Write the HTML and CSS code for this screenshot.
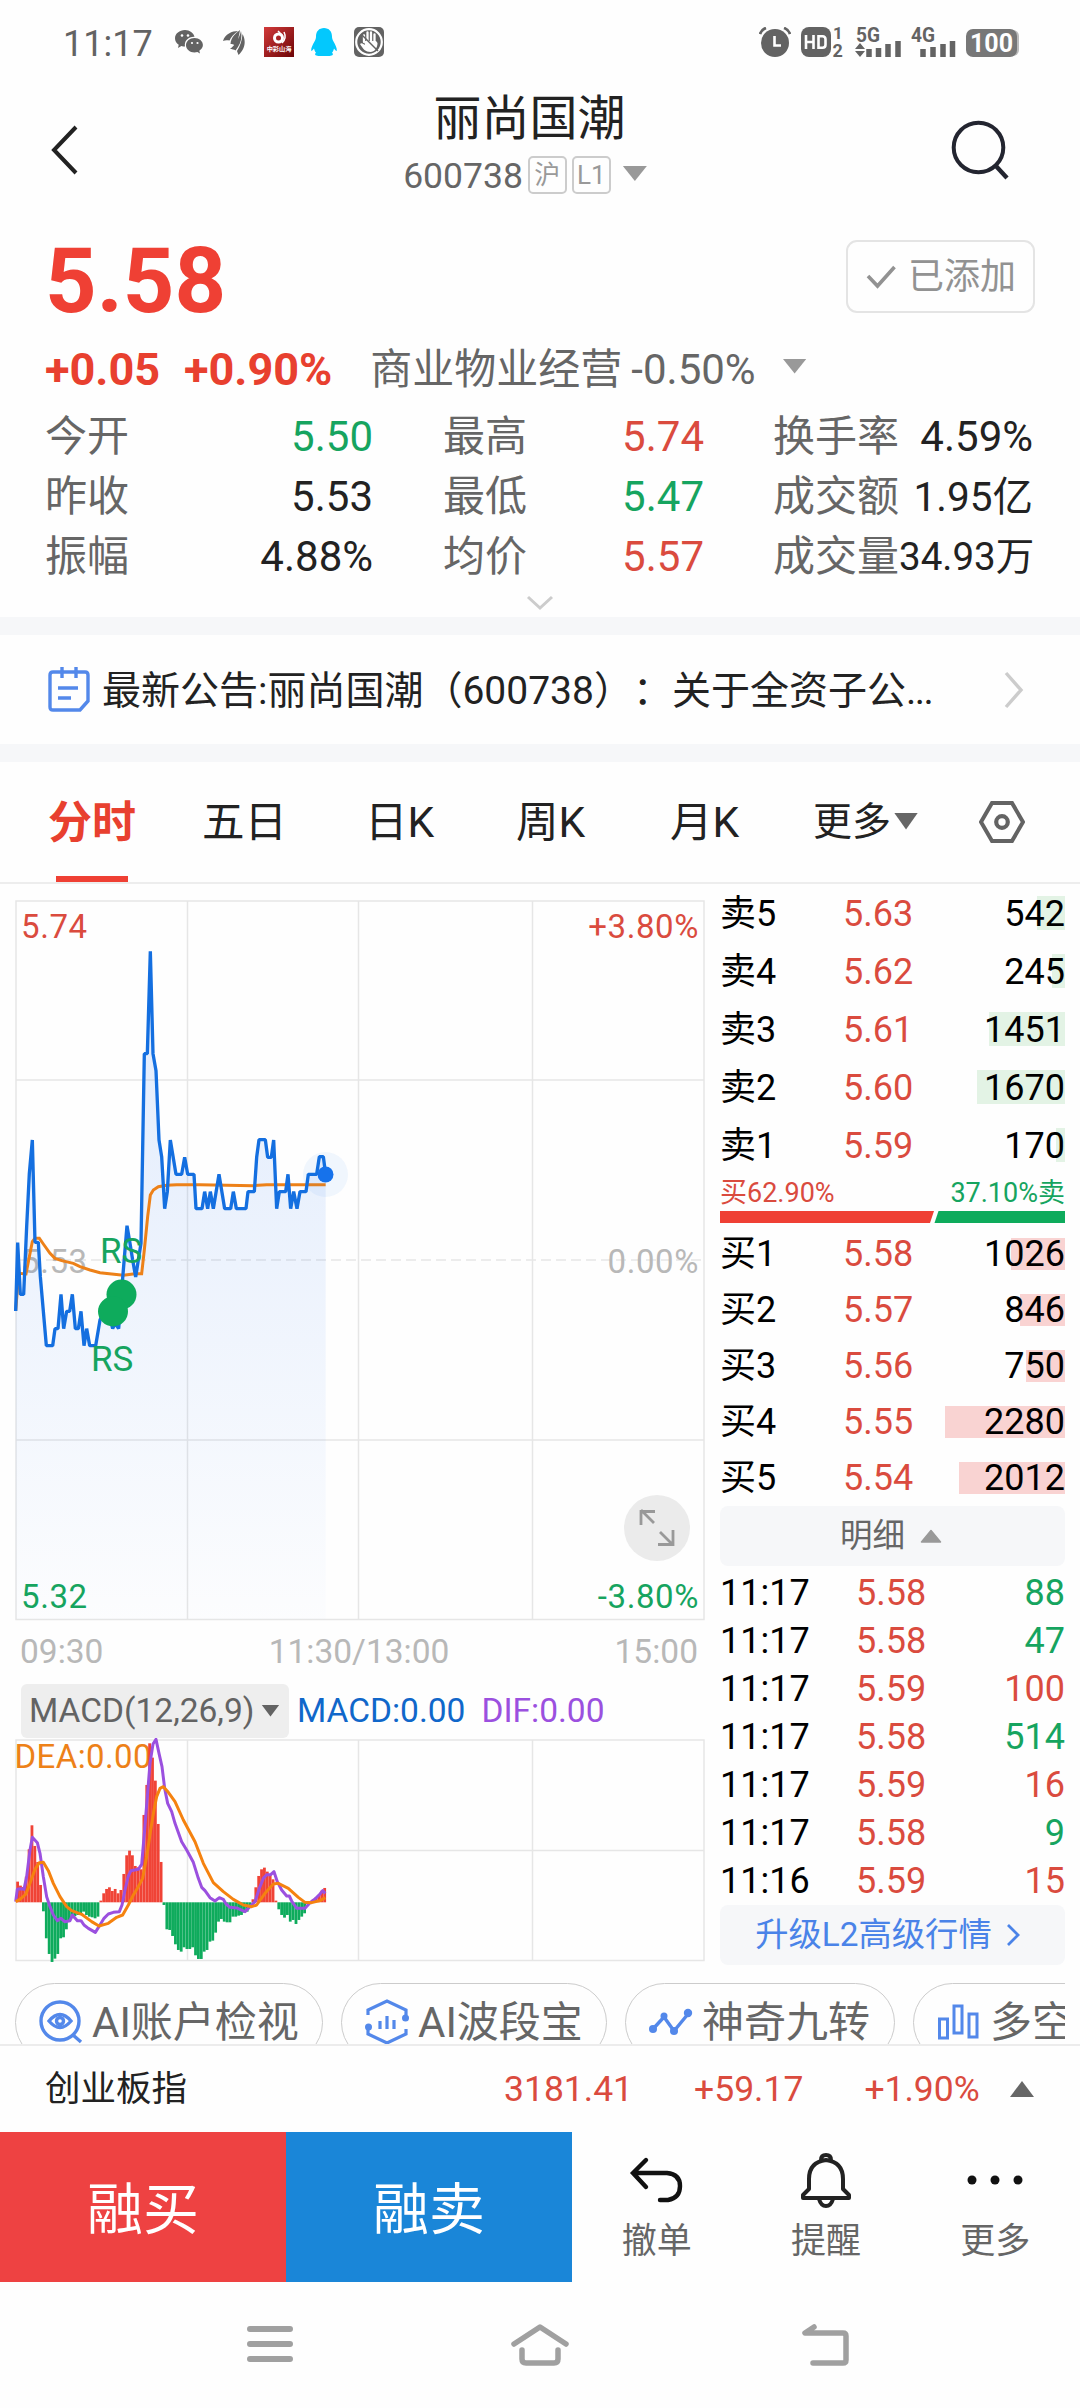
FILE: index.html
```html
<!DOCTYPE html>
<html lang="zh-CN">
<head>
    <meta charset="UTF-8">
    <meta name="viewport" content="width=device-width, initial-scale=1.0">
    <title>丽尚国潮 600738</title>
    <link rel="stylesheet" href="styles.css">
</head>
<body>
<div id="box">
    <div class="status">
        <span class="clock">11:17</span>
        <svg class="s-wechat" width="28" height="26" viewBox="0 0 28 26">
            <path d="M10 1C4.500 1 0 4.600 0 9.300c0 2.700 1.400 4.900 3.700 6.500L3 19l3.400-1.900c1.300.4 2.300.5 3.600.5C9 12 13 7.500 19.500 7.700 18.500 4 14.800 1 10 1z" fill="#636363"/>
            <path d="M19.500 9c-4.800 0-8.500 3.200-8.500 7.200s3.700 7.200 8.500 7.200c1 0 2-.2 2.900-.5L25 24.500l-.7-2.700c2.100-1.400 3.600-3.400 3.600-5.700C27.900 12.200 24.200 9 19.500 9z" fill="#636363"/>
            <g fill="#fff"><circle cx="7" cy="6.500" r="1.300"/><circle cx="13" cy="6.500" r="1.300"/><circle cx="17" cy="14" r="1.100"/><circle cx="22.500" cy="14" r="1.100"/></g>
        </svg>
        <svg class="s-wing" width="22" height="25" viewBox="0 0 22 25">
            <path d="M0 11C2 4 9 1 15 1 11 4 8 7 6.500 10.500 4 10 2 10 0 11zM7.500 14C8 7 13 3 17 0 16 6 15 11 12 15.500 10.500 14 9 14 7.500 14zM7 19c5-4 9-10 11-18 1.500 8-1 14-5.500 19.500C11 19.500 9 19 7 19zM14 21c3-5 5-10 5.500-17C24 12 21 20 15.500 25z" fill="#636363"/>
        </svg>
        <svg class="s-app" width="30" height="30" viewBox="0 0 30 30">
            <defs><linearGradient id="redapp" x1="0" y1="0" x2="1" y2="1"><stop offset="0" stop-color="#d23a3a"/><stop offset="1" stop-color="#6c0406"/></linearGradient></defs>
            <rect width="30" height="30" fill="url(#redapp)"/>
            <circle cx="14.500" cy="11" r="4" fill="none" stroke="#fff" stroke-width="3"/>
            <path d="M14 4l4 4M20 5c2 4 1 8-2 11" stroke="#fff" stroke-width="1.500" fill="none"/>
            <text x="15" y="23.500" font-size="6.200" font-weight="700" text-anchor="middle" fill="#fff">中彩山海</text>
        </svg>
        <svg class="s-qq" width="26" height="28" viewBox="0 0 26 28">
            <path d="M13 0c5 0 8 3.500 8 8.500 0 2 .5 3 1.500 5 2 3.500 3.500 6.500 3.300 9-.2 1-1.300 0-2.800-2-.4 2-1.200 3.300-2 4.200 2.500 2-.5 3.300-3.500 3.300H8.500C5.500 28 2.500 26.700 5 24.700c-.8-.9-1.600-2.200-2-4.200-1.500 2-2.600 3-2.800 2-.2-2.500 1.300-5.500 3.300-9C4.500 11.500 5 10.500 5 8.500 5 3.500 8 0 13 0z" fill="#03c8fd"/>
        </svg>
        <svg class="s-hand" width="30" height="30" viewBox="0 0 30 30">
            <rect width="30" height="30" rx="5" fill="#636363"/>
            <circle cx="15" cy="15" r="12.800" fill="none" stroke="#fff" stroke-width="2.200"/>
            <path d="M10 15V8.500M13.500 14V5.500M17 14V5.500M20.500 15V7.500" stroke="#fff" stroke-width="2.300" stroke-linecap="round"/>
            <path d="M6 17c1.500-2 3.500 0 5 1l-1-4h12l1.500 2c0 5-3 9-7 9-5 0-7.500-3-10.500-8z" fill="#fff"/>
            <path d="M7 7l17 17" stroke="#636363" stroke-width="1.500"/>
        </svg>
        <svg class="s-alarm" width="32" height="30" viewBox="0 0 32 30">
            <circle cx="16" cy="16" r="14" fill="#636363"/>
            <path d="M1 7C2 4 4 2 7 1M25 1c3 1 5 3 6 6" stroke="#636363" stroke-width="2.800" fill="none"/>
            <path d="M15.500 9v9.500H22" stroke="#fff" stroke-width="2.600" fill="none"/>
        </svg>
        <svg class="s-hd" width="44" height="48" viewBox="0 -8 44 48">
            <rect y="1" width="30" height="30" rx="8" fill="#636363"/>
            <path d="M5 9v14M12.500 9v14M5 16h7.500M17.500 10.300v11.400h4q3 0 3-3v-5.400q0-3-3-3z" stroke="#fff" stroke-width="2.600" fill="none"/>
            <text x="32" y="13" font-size="17" font-weight="700" fill="#636363">1</text>
            <text x="31.500" y="31" font-size="18" font-weight="700" fill="#636363">2</text>
        </svg>
        <svg class="s-5g" width="46" height="48" viewBox="0 -8 46 48">
            <text x="1" y="15.500" font-size="19.500" font-weight="700" fill="#636363" textLength="24" lengthAdjust="spacingAndGlyphs">5G</text>
            <path d="M0 23l5-6 5 6zM0 25l5 6 5-6z" fill="#636363"/>
            <path d="M14 31v-8M23.500 31v-9M33 31V18M43 31V15" stroke="#636363" stroke-width="5.500"/>
        </svg>
        <svg class="s-4g" width="46" height="48" viewBox="0 -8 46 48">
            <text x="0" y="15.500" font-size="19.500" font-weight="700" fill="#636363" textLength="24" lengthAdjust="spacingAndGlyphs">4G</text>
            <path d="M12 31v-8M22 31V21M32 31V18M41.500 31V15" stroke="#636363" stroke-width="5.500"/>
        </svg>
        <span class="battery">100</span>
    </div>

    <header>
        <svg class="back" width="28" height="50" viewBox="0 0 28 50"><path d="M26 2L4 25l22 23" fill="none" stroke="#222" stroke-width="4"/></svg>
        <div class="name">
            <h1>丽尚国潮</h1>
            <p><span>600738</span><i>沪</i><i>L1</i><b class="tri-down"></b></p>
        </div>
        <svg class="search" width="60" height="60" viewBox="0 0 60 60"><circle cx="27.500" cy="27.500" r="24.800" fill="none" stroke="#232530" stroke-width="4"/><path d="M44.500 45.500L56 58" stroke="#232530" stroke-width="4.400"/></svg>
    </header>

    <div class="quote">
        <div class="price">
            <strong>5.58</strong>
            <span class="added"><svg width="30" height="24" viewBox="0 0 30 24"><path d="M2 11l9.500 10L28.500 2" fill="none" stroke="#929292" stroke-width="3.600"/></svg>已添加</span>
        </div>
        <div class="change"><b>+0.05</b><b>+0.90%</b><span>商业物业经营</span><em>-0.50%</em><i class="tri-down"></i></div>
        <dl class="stats">
            <div><dt>今开</dt><dd class="green">5.50</dd></div>
            <div><dt>最高</dt><dd class="red">5.74</dd></div>
            <div><dt>换手率</dt><dd>4.59%</dd></div>
            <div><dt>昨收</dt><dd>5.53</dd></div>
            <div><dt>最低</dt><dd class="green">5.47</dd></div>
            <div><dt>成交额</dt><dd class="mid">1.95亿</dd></div>
            <div><dt>振幅</dt><dd>4.88%</dd></div>
            <div><dt>均价</dt><dd class="red">5.57</dd></div>
            <div><dt>成交量</dt><dd class="small">34.93万</dd></div>
        </dl>
        <svg class="fold" width="28" height="16" viewBox="0 0 28 16"><path d="M2 2l12 11L26 2" fill="none" stroke="#ccc" stroke-width="3"/></svg>
    </div>

    <div class="notice">
        <svg width="42" height="46" viewBox="0 0 42 46" fill="none" stroke="#5388ea" stroke-width="3.400">
            <path d="M5 5h32q3 0 3 3v26l-8 9H5q-3 0-3-3V8q0-3 3-3zM14 0v11M28 0v11M10 21h20M10 31h13"/>
        </svg>
        <p>最新公告:丽尚国潮（600738）：关于全资子公<span>...</span></p>
        <svg class="go" width="20" height="38" viewBox="0 0 20 38"><path d="M2 2l15 17L2 36" fill="none" stroke="#ccc" stroke-width="3.400"/></svg>
    </div>

    <ul class="tabs">
        <li class="active">分时</li>
        <li>五日</li>
        <li>日K</li>
        <li>周K</li>
        <li>月K</li>
        <li class="more">更多<i class="tri-down"></i></li>
        <li class="set"><svg width="46" height="42" viewBox="0 0 46 42" fill="none" stroke="#636363"><path d="M13 2h20l11 19-11 19H13L2 21z" stroke-width="4"/><circle cx="23" cy="21" r="5.800" stroke-width="4.200"/></svg></li>
    </ul>

    <section>
        <div class="left">
            <svg width="720" height="738" viewBox="0 0 720 738">
                <defs><linearGradient id="area" x1="0" y1="0" x2="0" y2="1"><stop offset="0" stop-color="#1668f0" stop-opacity=".13"/><stop offset="1" stop-color="#1668f0" stop-opacity=".01"/></linearGradient></defs>
                <g fill="none" stroke="#e6e6e6" stroke-width="1.500">
                    <path d="M16 17h688v718.500H16zM187.500 17v718M358.500 17v718M532.500 17v718M16 196h688M16 556h688"/>
                    <path d="M16 376h688" stroke-dasharray="10 5"/>
                </g>
                <g font-size="33" letter-spacing=".6">
                    <text x="21" y="389" fill="#b8b8b8">5.53</text>
                    <text x="699" y="389" fill="#b8b8b8" text-anchor="end">0.00%</text>
                </g>
                <g transform="translate(0 -4) scale(.33333)" fill="none" stroke-width="9" stroke-linejoin="miter">
                    <path stroke="none" fill="url(#area)" d="M47 1293L53 1088 61 1243 71 1243 80 1040 88 880 97 780 105 1087 115 1087 121 1190 139 1397 158 1397 165 1346 174 1346 183 1243 191 1346 200 1294 209 1294 217 1243 226 1346 235 1346 243 1294 252 1397 260 1346 269 1397 287 1397 300 1320 312 1294 325 1294 338 1346 345 1330 356 1346 364 1243 381 1037 390 1090 398 1140 407 1191 415 1140 423 1090 433 521 442 521 451 214 459 521 468 572 477 780 485 830 494 986 502 935 511 780 528 883 545 883 554 832 563 883 582 883 588 986 606 986 614 935 623 986 631 935 640 986 657 883 674 986 692 986 700 935 709 986 738 986 744 935 763 935 770 832 777 779 796 779 803 832 814 832 821 780 830 986 838 935 857 935 864 883 872 986 881 935 891 986 900 935 918 935 925 883 950 883 958 830 970 830 977 883V2218H47z"/>
                    <path stroke="#ed8118" d="M47 1293L56 1180 78 1182 88 1130 97 1085 105 1075 118 1075 130 1092 150 1120 165 1135 185 1142 220 1150 240 1160 270 1170 300 1178 335 1182 370 1186 405 1181 425 1181 433 1110 443 1010 451 945 460 930 475 920 500 916 530 914 600 914 760 917 800 914 850 914 977 914"/>
                    <path stroke="#146fe0" stroke-width="10" stroke-linejoin="bevel" d="M47 1293L53 1088 61 1243 71 1243 80 1040 88 880 97 780 105 1087 115 1087 121 1190 139 1397 158 1397 165 1346 174 1346 183 1243 191 1346 200 1294 209 1294 217 1243 226 1346 235 1346 243 1294 252 1397 260 1346 269 1397 287 1397 300 1320 312 1294 325 1294 338 1346 345 1330 356 1346 364 1243 381 1037 390 1090 398 1140 407 1191 415 1140 423 1090 433 521 442 521 451 214 459 521 468 572 477 780 485 830 494 986 502 935 511 780 528 883 545 883 554 832 563 883 582 883 588 986 606 986 614 935 623 986 631 935 640 986 657 883 674 986 692 986 700 935 709 986 738 986 744 935 763 935 770 832 777 779 796 779 803 832 814 832 821 780 830 986 838 935 857 935 864 883 872 986 881 935 891 986 900 935 918 935 925 883 950 883 958 830 970 830 977 883"/>
                </g>
                <circle cx="325.500" cy="290.500" r="22.500" fill="#1672eb" fill-opacity=".06"/>
                <circle cx="325.500" cy="290.500" r="8" fill="#1672eb"/>
                <g fill="#0eab5c"><circle cx="121.500" cy="410.500" r="15"/><circle cx="113" cy="427.500" r="15"/></g>
                <g font-size="33" letter-spacing=".6">
                    <text x="21" y="54" fill="#da4b3e">5.74</text>
                    <text x="699" y="54" fill="#da4b3e" text-anchor="end">+3.80%</text>
                    <text x="21" y="724" fill="#16a45f">5.32</text>
                    <text x="699" y="724" fill="#16a45f" text-anchor="end">-3.80%</text>
                    <text x="100" y="379" fill="#16a45f" font-size="35" letter-spacing="0">RS</text>
                    <text x="91" y="487" fill="#16a45f" font-size="35" letter-spacing="0">RS</text>
                </g>
                <circle cx="657" cy="644" r="33" fill="#ebebeb"/>
                <path d="M654 639l-13-13M655 627.500h-14v13.500M660 648l13 13M658 660.500h15V646" fill="none" stroke="#999" stroke-width="2.800"/>
            </svg>
            <div class="times"><span>09:30</span><span>11:30/13:00</span><span>15:00</span></div>
            <div class="macd"><span class="pick">MACD(12,26,9)<i class="tri-down"></i></span><span class="m1">MACD:0.00</span><span class="m2">DIF:0.00</span></div>
            <svg width="720" height="226" viewBox="0 0 720 226">
                <path d="M16 2h688v220.500H16zM187.500 2v220M358.500 2v220M532.500 2v220M16 112.500h688" fill="none" stroke="#e6e6e6" stroke-width="1.500"/>
                <text x="14.500" y="30" font-size="33" fill="#ed8118" letter-spacing=".4">DEA:0.00</text>
                <g id="bars"></g>
                <g transform="translate(0 -138) scale(.33333)" fill="none" stroke-width="9" stroke-linejoin="round">
                    <path stroke="#9b50df" d="M47 905L52 868 62 866 72 868 80 830 90 750 97 712 112 728 120 760 130 830 140 890 150 920 160 945 172 962 183 955 194 965 210 962 217 945 232 962 243 962 252 975 265 985 286 997 300 975 312 955 325 942 340 937 358 935 366 915 375 870 385 828 393 812 415 808 425 793 433 700 442 590 450 490 459 432 468 418 477 460 486 500 494 565 503 610 515 635 525 670 545 725 560 750 580 787 595 835 605 862 615 872 630 893 645 903 658 893 670 898 678 912 690 922 710 924 735 935 750 920 765 905 778 865 790 835 800 824 812 824 822 815 832 845 845 870 860 888 868 888 875 903 890 925 915 925 930 908 945 897 960 882 968 872 976 880"/>
                    <path stroke="#f5820f" d="M47 905L60 898 78 882 90 850 105 808 118 788 130 787 145 812 160 850 180 890 200 920 215 932 245 943 275 965 297 978 325 970 350 952 368 945 385 915 400 885 415 860 428 835 440 770 452 690 462 630 470 590 480 565 490 560 505 577 525 605 550 660 585 725 610 790 640 848 670 875 700 898 730 915 755 920 770 915 795 880 820 852 835 850 865 865 895 892 915 907 935 908 960 902 976 893"/>
                </g>
            </svg>
        </div>

        <div class="right">
            <ul class="sell">
                <li><span>卖5</span><em>5.63</em><b>542</b><i style="width:28px"></i></li>
                <li><span>卖4</span><em>5.62</em><b>245</b><i style="width:13px"></i></li>
                <li><span>卖3</span><em>5.61</em><b>1451</b><i style="width:76px"></i></li>
                <li><span>卖2</span><em>5.60</em><b>1670</b><i style="width:88px"></i></li>
                <li><span>卖1</span><em>5.59</em><b>170</b><i style="width:9px"></i></li>
            </ul>
            <div class="ratio"><span class="red">买62.90%</span><span class="green">37.10%卖</span></div>
            <svg class="ratiobar" width="345" height="12" viewBox="0 0 345 12"><path d="M0 0h214l-4 12H0z" fill="#ef4034"/><path d="M218.500 0H345v12H214.500z" fill="#0eab5c"/></svg>
            <ul class="buy">
                <li><span>买1</span><em>5.58</em><b>1026</b><i style="width:54px"></i></li>
                <li><span>买2</span><em>5.57</em><b>846</b><i style="width:45px"></i></li>
                <li><span>买3</span><em>5.56</em><b>750</b><i style="width:39px"></i></li>
                <li><span>买4</span><em>5.55</em><b>2280</b><i style="width:120px"></i></li>
                <li><span>买5</span><em>5.54</em><b>2012</b><i style="width:106px"></i></li>
            </ul>
            <div class="detail">明细<svg width="22" height="15" viewBox="0 0 22 15"><path d="M11 1.500L20.500 13H1.500z" fill="#999" stroke="#999" stroke-width="1.500" stroke-linejoin="round"/></svg></div>
            <ul class="ticks">
                <li><span>11:17</span><em>5.58</em><b class="green">88</b></li>
                <li><span>11:17</span><em>5.58</em><b class="green">47</b></li>
                <li><span>11:17</span><em>5.59</em><b class="red">100</b></li>
                <li><span>11:17</span><em>5.58</em><b class="green">514</b></li>
                <li><span>11:17</span><em>5.59</em><b class="red">16</b></li>
                <li><span>11:17</span><em>5.58</em><b class="green">9</b></li>
                <li><span>11:16</span><em>5.59</em><b class="red">15</b></li>
            </ul>
            <div class="level2">升级L2高级行情<svg width="14" height="24" viewBox="0 0 14 24"><path d="M2 2l10 10L2 22" fill="none" stroke="#4a83e8" stroke-width="2.800"/></svg></div>
        </div>
    </section>

    <div class="tools">
        <a class="t1"><svg width="44" height="44" viewBox="0 0 44 44" fill="none" stroke="#5388ea" stroke-width="3.400"><circle cx="21" cy="21" r="19"/><path d="M34 35l8 7M10 21q11-13 22 0-11 13-22 0z"/><circle cx="21" cy="21" r="3.500"/></svg>AI账户检视</a>
        <a class="t2"><svg width="44" height="46" viewBox="0 0 44 46" fill="none" stroke="#5388ea" stroke-width="3.200"><path d="M3 16v-5L22 2l19 9v5M3 30v5l19 9 19-9v-5M15 22v8M22 17v13M29 21v9"/><g fill="#5388ea" stroke="none"><circle cx="40.500" cy="19" r="3.500"/><circle cx="3.500" cy="28" r="3.500"/></g></svg>AI波段宝</a>
        <a class="t3"><svg width="44" height="28" viewBox="0 0 44 28" fill="none" stroke="#5388ea" stroke-width="3.400"><path d="M4 21L15 9l10 14L39 6"/><g fill="#5388ea" stroke="none"><circle cx="4" cy="21" r="4"/><circle cx="15" cy="8" r="3.500"/><circle cx="25" cy="23" r="4"/><circle cx="39" cy="5" r="4.200"/></g></svg>神奇九转</a>
        <a class="t4"><svg width="44" height="38" viewBox="0 0 44 38" fill="none" stroke="#5388ea" stroke-width="3"><path d="M2.500 16h8v19h-8zM17 3h8v27h-8zM32 11h8v23h-8z"/></svg>多空</a>
    </div>

    <div class="index"><span>创业板指</span><b>3181.41</b><b>+59.17</b><b>+1.90%</b><i></i></div>

    <footer>
        <a class="btn buybtn">融买</a>
        <a class="btn sellbtn">融卖</a>
        <a class="act"><svg width="56" height="56" viewBox="0 0 56 56" fill="none" stroke="#111" stroke-width="4.400"><path d="M17 8L4 21l13 14M5 21h33q13 1 13 13t-12 14h-8" stroke-linecap="round"/></svg>撤单</a>
        <a class="act"><svg width="56" height="56" viewBox="0 0 56 56" fill="none" stroke="#222" stroke-width="4" stroke-linejoin="round"><path d="M28 8q-17 2-17 19v10l-6 6v3h46v-3l-6-6V27Q45 10 28 8zM23 8q0-5 5-5t5 5M21 47q2 7 7 7t7-7"/></svg>提醒</a>
        <a class="act"><svg width="56" height="56" viewBox="0 0 56 56" fill="#111"><circle cx="5" cy="28" r="4.500"/><circle cx="28" cy="28" r="4.500"/><circle cx="51" cy="28" r="4.500"/></svg>更多</a>
    </footer>

    <div class="nav">
        <svg width="46" height="42" viewBox="0 0 46 42"><path d="M3 5h40M3 20h40M3 35h40" stroke="#a0a0a0" stroke-width="6" stroke-linecap="round"/></svg>
        <svg class="home" width="60" height="46" viewBox="0 0 60 46" fill="none" stroke="#a0a0a0" stroke-width="5.500" stroke-linecap="round" stroke-linejoin="round"><path d="M4 22L30 5l26 17M12 28v9q0 4 4 4h28q4 0 4-4v-9"/></svg>
        <svg width="50" height="44" viewBox="0 0 50 44" fill="none" stroke="#a0a0a0" stroke-width="5.500" stroke-linecap="round" stroke-linejoin="round"><path d="M14 4L5 10h38q3 0 3 3v24q0 3-3 3H13"/></svg>
    </div>
</div>
<script src="bars.js"></script>
</body>
</html>
```
FILE: bars.js
```js
// 每分钟的MACD柱，正数在零轴上方
(function(){
    var aData=[62,50,46,77,159,231,169,121,52,-27,-108,-155,-179,-169,-155,-108,-105,-81,-58,-48,-41,-38,-38,-28,-38,-43,-45,-48,-43,5,27,40,45,34,40,27,37,85,141,155,141,109,105,99,262,352,477,434,365,235,121,-8,-81,-83,-101,-126,-143,-148,-135,-140,-140,-135,-159,-170,-170,-148,-143,-118,-115,-91,-58,-50,-58,-60,-60,-43,-43,-40,-38,-31,-28,-8,9,45,79,99,104,92,82,69,5,-21,-38,-46,-38,-58,-53,-65,-53,-43,-33,-5,3,9,15,22,35,43];
    var oBars=document.querySelector('#bars');
    var zero=164.3;
    for(var i=0;i<aData.length;i++){
        var oRect=document.createElementNS('http://www.w3.org/2000/svg', 'rect');
        var h=Math.abs(aData[i])/3;
        oRect.setAttribute('x', 16.2+i*2.87);
        oRect.setAttribute('y', aData[i]>0?zero-h:zero);
        oRect.setAttribute('width', 2.8);
        oRect.setAttribute('height', h);
        oRect.setAttribute('fill', aData[i]>0?'#f04336':'#0eab5c');
        oBars.appendChild(oRect);
    }
})();
```
FILE: styles.css
```css
*{
    margin: 0;
    padding: 0;
    box-sizing: border-box;
    list-style: none;
    font-style: normal;
}
body{
    font-family: Roboto, "Noto Sans CJK SC", sans-serif;
    background: #fefefe;
    color: #222;
}
svg{
    display: block;
    flex: none;
}
#box{
    width: 1080px;
    height: 2408px;
    overflow: hidden;
}
.red{color: #da4b3e;}
.green{color: #16a45f;}
.tri-down{
    width: 24px;
    height: 15px;
    background: #999;
    clip-path: polygon(0 0, 100% 0, 50% 100%);
}

.status{
    height: 84px;
    display: flex;
    align-items: center;
    padding-left: 63px;
    color: #636363;
}
.clock{
    width: 112px;
    font-size: 36px;
    line-height: 84px;
    padding-top: 3px;
}
.s-wing{margin-left: 20px;}
.s-app{margin-left: 19px;}
.s-qq{margin-left: 17px;}
.s-hand{margin-left: 17px;}
.s-alarm{margin-left: 375px;}
.s-hd{margin-left: 10px;}
.s-5g{margin-left: 10px;}
.s-4g{margin-left: 10px;}
.battery{
    width: 51px;
    height: 28px;
    margin: 2px 0 0 9px;
    border-radius: 7px;
    background: #777;
    color: #fff;
    font-size: 25px;
    font-weight: 700;
    line-height: 29px;
    text-align: center;
    box-shadow: 3px 0 0 -1px #bbb;
}

header{
    height: 136px;
    display: flex;
    justify-content: space-between;
    padding: 0 69px 0 50px;
}
.back{margin-top: 41px;}
.search{margin-top: 36px;}
.name{
    width: 300px;
    margin-left: 30px;
    text-align: center;
}
.name h1{
    font-size: 48px;
    font-weight: 400;
    line-height: 60px;
    padding-top: 5px;
}
.name p{
    display: flex;
    align-items: center;
    justify-content: center;
    height: 44px;
    margin: 4px 9px 0 0;
    font-size: 35.5px;
    color: #666;
}
.name p span{
    line-height: 46px;
    padding-top: 2px;
}
.name i{
    width: 39px;
    height: 38px;
    margin-left: 5px;
    border: 2px solid #ccc;
    border-radius: 5px;
    font-size: 26px;
    line-height: 35px;
    color: #999;
}
.name .tri-down{margin: -3px 0 0 12px;}

.quote{
    height: 397px;
    padding: 0 45px;
}
.price{
    display: flex;
    justify-content: space-between;
    align-items: flex-start;
    padding-top: 20px;
    height: 108px;
}
.price strong{
    font-size: 90px;
    line-height: 84px;
    color: #ef4034;
}
.added{
    display: flex;
    align-items: center;
    width: 189px;
    height: 73px;
    padding-left: 18px;
    border: 2px solid #e4e4e4;
    border-radius: 11px;
    font-size: 36px;
    line-height: 72px;
    color: #929292;
}
.added svg{margin-right: 12px;}
.change{
    display: flex;
    align-items: center;
    height: 78px;
    padding-top: 6px;
    font-size: 42px;
    line-height: 60px;
}
.change b{
    margin-right: 24px;
    font-size: 45px;
    color: #e8402f;
}
.change span{
    margin: 0 9px 0 14px;
    color: #666;
}
.change em{color: #666;}
.change i{margin: -8px 0 0 27px;}
.stats{
    display: grid;
    grid-template-columns: 328px 261px 260px;
    column-gap: 70px;
    height: 180px;
}
.stats div{
    display: flex;
    justify-content: space-between;
    height: 60px;
    line-height: 62px;
    font-size: 42px;
    white-space: nowrap;
}
.stats div:nth-child(3n){margin: 0 1px 0 -1px;}
.stats dt{color: #666;}
.stats .mid{font-size: 40.5px;}
.stats .small{font-size: 38.5px;}
.fold{margin: 9px auto 0;}

.notice{
    height: 145px;
    display: flex;
    align-items: center;
    padding: 0 56px 0 48px;
    border-top: 18px solid #f6f7f9;
    border-bottom: 18px solid #f6f7f9;
}
.notice p{
    margin-left: 12px;
    padding-top: 3px;
    font-size: 39px;
    line-height: 60px;
    white-space: nowrap;
    text-spacing-trim: space-all;
}
.notice p span{letter-spacing: -1.5px;}
.go{margin-left: auto;}

.tabs{
    height: 122px;
    display: grid;
    grid-template-columns: 154px 163px 151px 154px 143px 166px 46px;
    padding-left: 48px;
    border-bottom: 2px solid #ededed;
    font-size: 42.5px;
    line-height: 122px;
}
.tabs li{
    height: 120px;
    color: #222;
}
.tabs .active{
    font-size: 44px;
    font-weight: 700;
    color: #e8402f;
    background: linear-gradient(#ef4034, #ef4034) 8px bottom / 72px 6px no-repeat;
}
.tabs .more{
    display: flex;
    align-items: center;
    font-size: 39px;
}
.tabs .more i{
    height: 17px;
    margin: -2px 0 0 3px;
    background: #666;
}
.tabs .set{
    display: flex;
    align-items: center;
}

section{
    display: flex;
    height: 1094px;
}
.left{width: 720px;}
.times{
    display: flex;
    justify-content: space-between;
    padding: 0 22px 0 20px;
    height: 61px;
    line-height: 60px;
    font-size: 33.5px;
    color: #b8b8b8;
}
.macd{
    display: flex;
    align-items: center;
    height: 55px;
    padding-left: 21px;
    font-size: 33.5px;
}
.macd span{line-height: 57px;}
.pick{
    display: flex;
    align-items: center;
    width: 268px;
    height: 54px;
    padding-left: 8px;
    border-radius: 6px;
    background: #eee;
    color: #636363;
}
.pick i{
    width: 18px;
    height: 12px;
    margin-left: 7px;
    background: #636363;
}
.m1{
    margin-left: 8px;
    color: #1067ca;
}
.m2{
    margin-left: 16px;
    color: #9b50df;
}

.right{
    width: 345px;
    font-size: 36px;
}
.right li{
    display: flex;
    position: relative;
    height: 58px;
    line-height: 61px;
    color: #000;
}
.right li span{width: 123px;}
.right li em{color: #da4b3e;}
.right li b{
    margin-left: auto;
    font-weight: 400;
    z-index: 1;
}
/* 挂单量底色条，压在数字下面 */
.right li i{
    position: absolute;
    right: 0;
    top: 12px;
    height: 34px;
    background: #e3f3e5;
}
.right .buy li{
    height: 56px;
    line-height: 57px;
}
.right .buy li i{
    height: 32px;
    background: #f9d3d2;
}
.ratio{
    display: flex;
    justify-content: space-between;
    height: 37px;
    font-size: 27px;
    line-height: 38px;
}
.ratiobar{margin-bottom: 3px;}
.detail,.level2{
    display: flex;
    align-items: center;
    justify-content: center;
    height: 60px;
    border-radius: 8px;
    background: #f6f7f9;
    font-size: 32.5px;
    line-height: 62px;
    color: #666;
}
.detail{padding-right: 3px;}
.detail svg{margin-left: 15px;}
.level2 svg{margin-left: 14px;}
.level2{
    padding-right: 10px;
    font-size: 33.3px;
    color: #4a83e8;
}
.right .ticks li{
    height: 48px;
    line-height: 51px;
}
.ticks{padding: 2px 0 1px;}
.right .ticks li span{width: 136px;}

.tools{
    display: flex;
    height: 66px;
    margin: 0 15px;
    padding-top: 5px;
    overflow: hidden;
}
.tools a{
    display: flex;
    align-items: center;
    flex: none;
    height: 79px;
    margin-right: 18px;
    padding-left: 23px;
    border: 1.5px solid #ccc;
    border-radius: 40px;
    font-size: 42px;
    line-height: 78px;
    color: #666;
    white-space: nowrap;
}
.tools svg{
    margin-top: -2px;
    margin-right: 9px;
}
.t1{width: 308px;}
.t2{width: 266px;}
.t3{width: 270px;}
.t4{width: 270px;}

.index{
    display: flex;
    align-items: center;
    height: 88px;
    padding: 0 46px 0 45px;
    border-top: 2px solid #ececec;
    font-size: 35.5px;
    line-height: 90px;
}
.index span{
    width: 459px;
    font-size: 35.5px;
}
.index b{
    font-weight: 400;
    color: #da4b3e;
}
.index b+b{margin-left: 61px;}
.index i{
    width: 24px;
    height: 16px;
    margin-left: auto;
    background: #666;
    clip-path: polygon(50% 0, 100% 100%, 0 100%);
}

footer{
    display: flex;
    height: 150px;
}
.btn{
    width: 286px;
    color: #fff;
    font-size: 56px;
    line-height: 156px;
    text-align: center;
}
.buybtn{background: #ee4242;}
.sellbtn{background: #1a86d8;}
.act{
    flex: 1;
    display: flex;
    flex-direction: column;
    align-items: center;
    padding-top: 20px;
    font-size: 35px;
    line-height: 67px;
    color: #666;
}

.nav{
    display: flex;
    justify-content: space-between;
    align-items: center;
    height: 126px;
    padding: 0 230px 0 247px;
}
.home{margin-right: 13px;}
```
